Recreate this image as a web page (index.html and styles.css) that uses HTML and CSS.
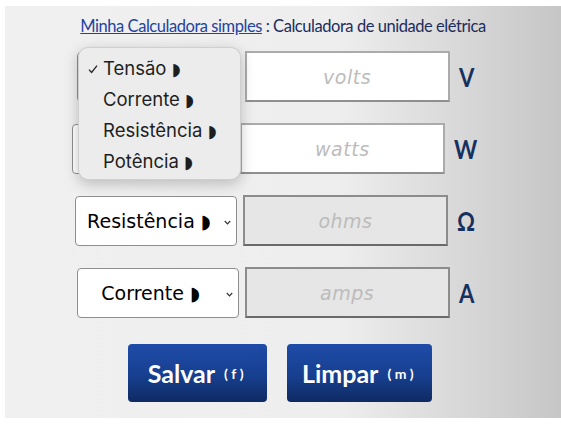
FILE: index.html
```html
<!DOCTYPE html>
<html lang="pt">
<head>
<meta charset="utf-8">
<title>Calculadora de unidade elétrica</title>
<link rel="stylesheet" href="styles.css">
</head>
<body>
<div class="panel">
  <p class="title"><a href="#" class="title-link">Minha Calculadora simples</a> : Calculadora de unidade elétrica</p>
  <div class="rows">
    <div class="row">
      <div class="sel-wrap">
        <select class="sel"><option>Tensão ◗</option><option>Corrente ◗</option><option>Resistência ◗</option><option>Potência ◗</option></select>
        <svg class="chev" width="7" height="5" viewBox="0 0 7 5"><path d="M0.8 1 L3.5 3.8 L6.2 1" fill="none" stroke="#333" stroke-width="1.2"/></svg>
      </div>
      <input class="field" type="text" placeholder="volts">
      <span class="unit">V</span>
    </div>
    <div class="row">
      <div class="sel-wrap">
        <select class="sel"><option>Potência ◗</option><option>Tensão ◗</option><option>Corrente ◗</option><option>Resistência ◗</option></select>
        <svg class="chev" width="7" height="5" viewBox="0 0 7 5"><path d="M0.8 1 L3.5 3.8 L6.2 1" fill="none" stroke="#333" stroke-width="1.2"/></svg>
      </div>
      <input class="field" type="text" placeholder="watts">
      <span class="unit">W</span>
    </div>
    <div class="row">
      <div class="sel-wrap">
        <select class="sel"><option>Resistência ◗</option><option>Tensão ◗</option><option>Corrente ◗</option><option>Potência ◗</option></select>
        <svg class="chev" width="7" height="5" viewBox="0 0 7 5"><path d="M0.8 1 L3.5 3.8 L6.2 1" fill="none" stroke="#333" stroke-width="1.2"/></svg>
      </div>
      <input class="field field-off" type="text" placeholder="ohms" readonly>
      <span class="unit">Ω</span>
    </div>
    <div class="row">
      <div class="sel-wrap">
        <select class="sel"><option>Corrente ◗</option><option>Tensão ◗</option><option>Resistência ◗</option><option>Potência ◗</option></select>
        <svg class="chev" width="7" height="5" viewBox="0 0 7 5"><path d="M0.8 1 L3.5 3.8 L6.2 1" fill="none" stroke="#333" stroke-width="1.2"/></svg>
      </div>
      <input class="field field-off" type="text" placeholder="amps" readonly>
      <span class="unit">A</span>
    </div>
  </div>
  <div class="buttons">
    <button class="btn">Salvar<span class="key">(f)</span></button>
    <button class="btn">Limpar<span class="key">(m)</span></button>
  </div>
  <ul class="popup">
    <li class="pop-item"><svg class="check" width="10" height="10" viewBox="0 0 10 10"><path d="M1 5.6 L3.6 8.4 L9 1.6" fill="none" stroke="#222" stroke-width="1.3"/></svg>Tensão <span class="mark">◗</span></li>
    <li class="pop-item">Corrente <span class="mark">◗</span></li>
    <li class="pop-item">Resistência <span class="mark">◗</span></li>
    <li class="pop-item">Potência <span class="mark">◗</span></li>
  </ul>
</div>
</body>
</html>
```
FILE: styles.css
```css
* { box-sizing: border-box; }
html, body { margin: 0; padding: 0; background: #fff; }
body { width: 561px; height: 424px; overflow: hidden; padding: 6px 0 0 5px; }

.panel {
  position: relative;
  width: 556px;
  height: 412px;
  background: linear-gradient(to right, #f0f0f0 0%, #eeeeee 60%, #c6c6c6 100%);
  padding-top: 10px;
  display: flex;
  flex-direction: column;
  align-items: center;
}

.title {
  margin: 0;
  font-family: Lato, "Liberation Sans", sans-serif;
  font-size: 16.5px;
  letter-spacing: -0.45px;
  line-height: 20px;
  color: #1c2d5e;
}
.title-link { color: #2343a0; text-decoration: underline; }

.rows {
  margin-top: 15px;
  display: flex;
  flex-direction: column;
  align-items: center;
  gap: 21px;
  padding-right: 12px;
}
.row { display: flex; align-items: center; height: 51px; }

.sel-wrap { position: relative; width: 162px; height: 50px; }
.sel {
  appearance: none;
  -webkit-appearance: none;
  width: 100%;
  height: 100%;
  background: #fff;
  border: 1px solid #8e8e8e;
  border-radius: 4px;
  font-family: "DejaVu Sans", sans-serif;
  font-size: 19px;
  color: #000;
  text-align: center;
  text-align-last: center;
  padding: 0 14px 0 0;
  margin: 0;
}
.chev { position: absolute; right: 6px; top: 24px; pointer-events: none; }

.field {
  margin-left: 6px;
  width: 205px;
  height: 51px;
  border: 2px solid #ababab;
  border-bottom-color: #8f8f8f;
  background: #fff;
  text-align: center;
  font-family: "DejaVu Sans", sans-serif;
  font-style: italic;
  font-size: 19px;
  outline: none;
}
.field::placeholder { color: #bcbcbc; letter-spacing: 0.5px; }
.field-off { background: #e6e6e6; border-color: #8c8c8c; border-bottom-color: #6a6a6a; }

.unit {
  margin-left: 9px;
  font-family: Lato, "Liberation Sans", sans-serif;
  font-weight: bold;
  font-size: 27px;
  color: #16305f;
  transform: scaleX(0.82);
  transform-origin: left center;
}

.buttons { margin-top: 26px; display: flex; gap: 20px; margin-right: 6px; }
.btn {
  min-width: 139px;
  height: 58px;
  padding: 0 15px;
  border: none;
  border-radius: 4px;
  background: linear-gradient(to bottom, #1f4ca9 0%, #173f8f 55%, #0f2a63 100%);
  color: #fff;
  font-family: Lato, "Liberation Sans", sans-serif;
  font-weight: bold;
  font-size: 25px;
  display: flex;
  align-items: center;
  justify-content: center;
}
.key { font-size: 14px; letter-spacing: 3.5px; margin-left: 9px; }

.popup {
  position: absolute;
  left: 73px;
  top: 41px;
  width: 163px;
  height: 133px;
  margin: 0;
  padding: 5px 0 0 0;
  list-style: none;
  background: #ececec;
  border: 1px solid rgba(0,0,0,0.12);
  border-radius: 10px;
  box-shadow: 0 4px 14px rgba(0,0,0,0.22);
  font-family: Inter, "Liberation Sans", sans-serif;
  font-size: 18.5px;
  color: #1e1e1e;
}
.pop-item { position: relative; height: 31px; line-height: 31px; padding-left: 24px; }
.mark { font-family: "DejaVu Sans", sans-serif; font-size: 17px; }
.check { position: absolute; left: 9px; top: 11px; }
```
